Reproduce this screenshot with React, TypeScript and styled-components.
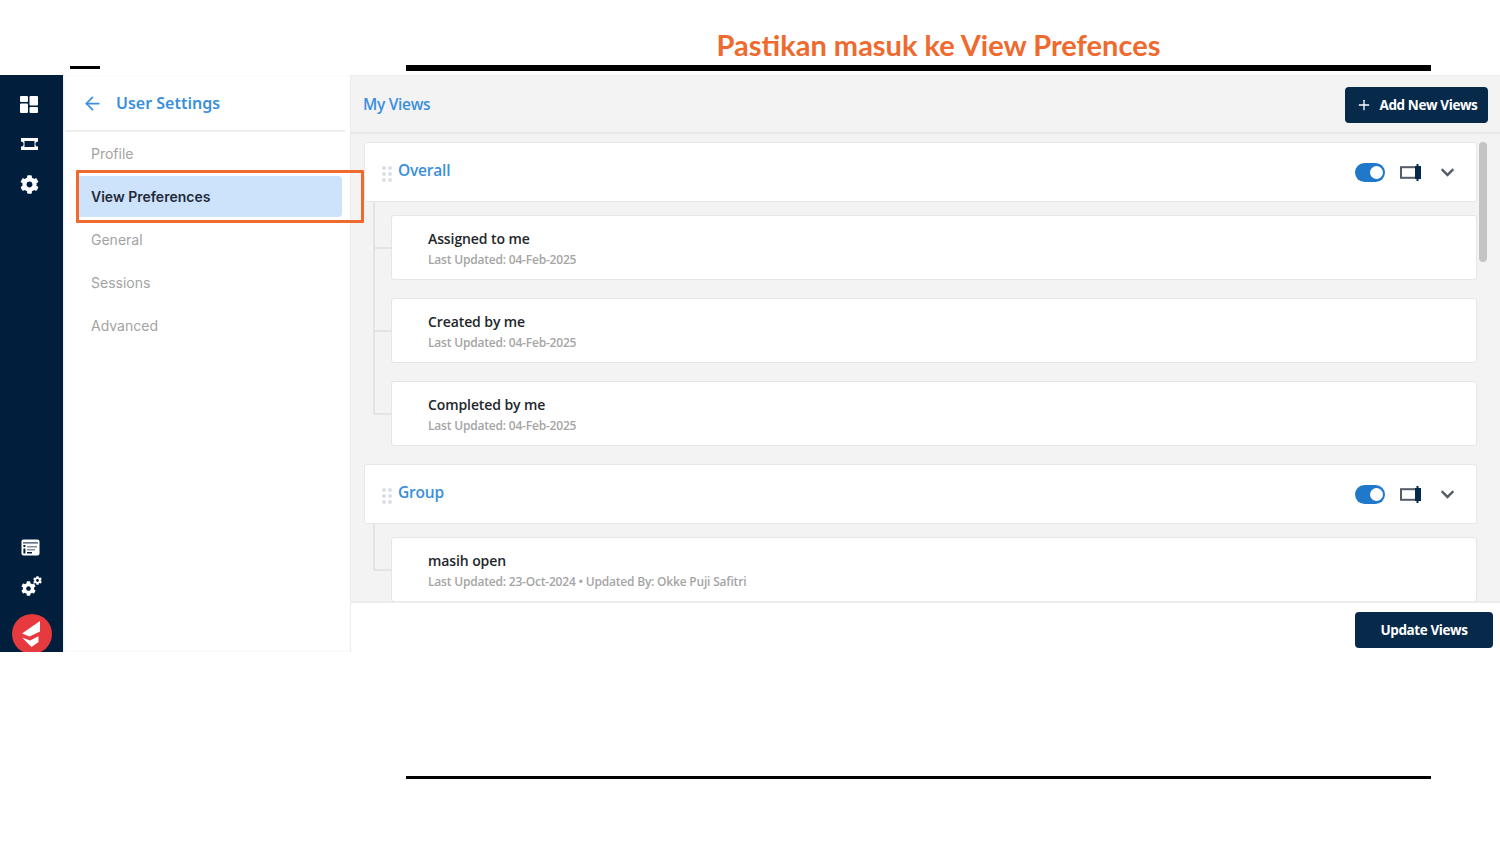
import styled, { createGlobalStyle } from "styled-components";
import { ArrowLeft, Plus } from "lucide-react";
import { FaChevronDown, FaCog } from "react-icons/fa";

const GlobalStyle = createGlobalStyle`
  html, body { margin: 0; padding: 0; background: #fff; }
  body { font-family: "Open Sans", "Liberation Sans", sans-serif; }
  * { box-sizing: border-box; }
`;

const Slide = styled.div`
  width: 1500px;
  height: 844px;
  background: #fff;
  overflow: hidden;
`;

const TitleBar = styled.div`
  height: 75px;
  display: flex;
  align-items: flex-end;
  padding-left: 70px;
`;

const ShortRule = styled.div`
  width: 30px;
  height: 3px;
  margin-bottom: 6px;
  margin-right: 306px;
  background: #000;
`;

const TitleColumn = styled.div`
  width: 1025px;
  margin-bottom: 4px;
`;

const Title = styled.h1`
  margin: 0 0 2px;
  padding-left: 40px;
  text-align: center;
  font-family: Lato, "Liberation Sans", sans-serif;
  font-size: 29px;
  line-height: 36px;
  font-weight: 700;
  color: #ee6a2e;
`;

const LongRule = styled.div<{ $thick: number }>`
  width: 1025px;
  height: ${(p) => p.$thick}px;
  background: #000;
`;

const Frame = styled.div`
  position: relative;
  height: 577px;
  display: flex;
  overflow: hidden;
`;

const Rail = styled.nav`
  width: 63px;
  flex: none;
  background: #011f3d;
  display: flex;
  flex-direction: column;
  align-items: center;
  padding: 19px 5px 0 0;
  color: #fff;
`;

const RailGroup = styled.div`
  display: flex;
  flex-direction: column;
  align-items: center;
  gap: 20px;
`;

const RailBottom = styled(RailGroup)`
  margin-top: auto;
  gap: 19px;
  padding-left: 2px;
`;

const RailIcon = styled.div`
  width: 20px;
  height: 20px;
  display: flex;
  align-items: center;
  justify-content: center;
`;

const GearPair = styled(RailIcon)`
  position: relative;
`;

const SmallGear = styled(FaCog)`
  position: absolute;
  top: 0;
  right: -2px;
`;

const LogoBadge = styled.div`
  width: 40px;
  height: 40px;
  margin: -1px 0 -2px 4px;
  border-radius: 50%;
  background: #e63a3f;
  display: flex;
  align-items: center;
  justify-content: center;
`;

const SettingsPanel = styled.aside`
  width: 288px;
  flex: none;
  background: #fff;
  padding: 1px 5px 0 2px;
  box-shadow: inset 1px 0 2px #e9edf1;
  border-right: 1px solid #ececec;
`;

const PanelHeader = styled.div`
  height: 56px;
  display: flex;
  align-items: center;
  gap: 13px;
  padding-left: 17px;
  border-bottom: 2px solid #eeeeee;
  color: #3a8fdc;
`;

const PanelTitle = styled.span`
  font-family: "Noto Sans", sans-serif;
  font-size: 16px;
  font-weight: 600;
`;

const PanelList = styled.ul`
  list-style: none;
  margin: 0;
  padding: 0 3px 0 12px;
`;

const PanelItem = styled.li<{ $active?: boolean }>`
  height: ${(p) => (p.$active ? "41px" : "43px")};
  margin: ${(p) => (p.$active ? "1px 0" : "0")};
  padding-left: 14px;
  display: flex;
  align-items: center;
  border-radius: 4px;
  font-family: Inter, sans-serif;
  font-size: 14px;
  font-weight: ${(p) => (p.$active ? 600 : 400)};
  color: ${(p) => (p.$active ? "#1f2b3a" : "#a3a3a3")};
  background: ${(p) => (p.$active ? "#cde2fb" : "transparent")};
`;

const Highlight = styled.div`
  position: absolute;
  left: 76px;
  top: 95px;
  width: 288px;
  height: 53px;
  border: 3px solid #ee6a2e;
  border-radius: 1px;
`;

const Main = styled.main`
  flex: 1;
  min-width: 0;
  display: flex;
  flex-direction: column;
  background: #f3f3f3;
  border-top: 1px solid #eee;
`;

const MainHeader = styled.div`
  height: 58px;
  flex: none;
  display: flex;
  align-items: center;
  justify-content: space-between;
  padding: 2px 12px 0 12px;
  border-bottom: 2px solid #e8e8e8;
`;

const MainTitle = styled.h2`
  margin: 0 0 3px;
  font-size: 15.5px;
  font-weight: 600;
  letter-spacing: -0.3px;
  color: #3a8fdc;
`;

const DarkButton = styled.button<{ $width: number }>`
  width: ${(p) => p.$width}px;
  height: 36px;
  display: flex;
  align-items: center;
  justify-content: center;
  gap: 8px;
  border: none;
  border-radius: 4px;
  background: #07294a;
  color: #fff;
  font-family: "Open Sans", sans-serif;
  font-size: 13.5px;
  font-weight: 700;
  letter-spacing: -0.4px;
`;

const Scroller = styled.div`
  position: relative;
  flex: 1;
  min-height: 0;
  overflow: hidden;
  padding: 8px 23px 0 13px;
`;

const ScrollThumb = styled.div`
  position: absolute;
  top: 8px;
  right: 13px;
  width: 8px;
  height: 120px;
  border-radius: 4px;
  background: #c4c4c4;
`;

const GroupCard = styled.div`
  height: 60px;
  display: flex;
  align-items: center;
  padding: 0 21px 0 17px;
  background: #fff;
  border: 1px solid #e8e8e8;
  border-radius: 3px;
`;

const Grip = styled.div`
  display: grid;
  grid-template-columns: repeat(2, 4px);
  grid-auto-rows: 4px;
  gap: 2px;
  margin: 3px 6px 0 0;
  span {
    border-radius: 50%;
    background: #dcdfe4;
  }
`;

const GroupName = styled.span`
  font-size: 15.5px;
  font-weight: 600;
  letter-spacing: -0.2px;
  color: #3a8fdc;
  margin-bottom: 4px;
`;

const GroupActions = styled.div`
  margin-left: auto;
  display: flex;
  align-items: center;
  color: #555d66;
`;

const Toggle = styled.div`
  width: 30px;
  height: 19px;
  margin-right: 15px;
  padding: 3px 2px;
  display: flex;
  justify-content: flex-end;
  border-radius: 10px;
  background: #1f78c9;
  &::after {
    content: "";
    width: 13px;
    height: 13px;
    border-radius: 50%;
    background: #fff;
  }
`;

const ChevronIcon = styled(FaChevronDown)`
  margin-left: 18px;
`;

const ChildList = styled.div`
  position: relative;
  display: flex;
  flex-direction: column;
  gap: 18px;
  padding: 13px 0 18px 27px;
  &::before {
    content: "";
    position: absolute;
    left: 9px;
    top: 0;
    bottom: 50px;
    width: 2px;
    background: #e3e3e3;
  }
`;

const ChildCard = styled.div`
  position: relative;
  height: 65px;
  flex: none;
  padding: 13px 0 0 36px;
  background: #fff;
  border: 1px solid #e6e6e6;
  border-radius: 3px;
  &::before {
    content: "";
    position: absolute;
    left: -18px;
    top: 31px;
    width: 18px;
    height: 2px;
    background: #e3e3e3;
  }
`;

const ChildName = styled.div`
  font-size: 14px;
  line-height: 19px;
  font-weight: 600;
  letter-spacing: -0.1px;
  color: #22262b;
`;

const ChildMeta = styled.div`
  margin-top: 4px;
  font-size: 12px;
  line-height: 16px;
  font-weight: 600;
  letter-spacing: -0.2px;
  color: #a5a5a5;
`;

const Footer = styled.div`
  height: 51px;
  flex: none;
  display: flex;
  justify-content: flex-end;
  padding: 9px 7px 0 0;
  background: #fff;
  border-top: 2px solid #ececec;
`;

const BottomRule = styled.div`
  margin: 124px 0 0 406px;
`;

const DashboardIcon = () => (
  <svg width="18" height="17" viewBox="0 0 18 17" fill="#fff">
    <rect x="0" y="0" width="8" height="6" rx="1" />
    <rect x="0" y="7.5" width="8" height="9.5" rx="1" />
    <rect x="9.5" y="0" width="8.5" height="9.5" rx="1" />
    <rect x="9.5" y="11" width="8.5" height="6" rx="1" />
  </svg>
);

const TicketIcon = () => (
  <svg width="19" height="14" viewBox="0 0 19 14">
    <path
      fill="#fff"
      d="M1 1h17v3.4a2.6 2.6 0 0 0 0 5.2V13H1V9.6a2.6 2.6 0 0 0 0-5.2z"
    />
    <rect x="4.5" y="4" width="10" height="6" fill="#011f3d" />
  </svg>
);

const WindowListIcon = () => (
  <svg width="19" height="17" viewBox="0 0 19 17">
    <rect x="0.5" y="0.5" width="18" height="16" rx="2" fill="#fff" />
    <rect x="2" y="3.4" width="15" height="1" fill="#011f3d" />
    <rect x="2.4" y="6" width="2" height="2" fill="#011f3d" />
    <rect x="2.4" y="9.5" width="2" height="5" fill="#011f3d" />
    <rect x="6" y="7" width="10" height="1.5" fill="#7f8fa0" />
    <rect x="6" y="10" width="8" height="1.5" fill="#7f8fa0" />
    <rect x="6" y="13" width="5" height="1.5" fill="#011f3d" />
  </svg>
);

const LogoMark = () => (
  <svg width="22" height="26" viewBox="0 0 22 26" fill="#fff">
    <path d="M19 0v10.5L8.5 15.5 1 12.5z" />
    <path d="M1 16.5l8 3 8.5-4.2V21l-7 5z" />
  </svg>
);

const PanelToggleIcon = () => (
  <svg width="22" height="19" viewBox="0 0 22 19" fill="none">
    <rect x="1" y="4.2" width="16" height="10.6" stroke="#555d66" strokeWidth="2" />
    <rect x="15" y="3" width="6" height="13" fill="#07294a" />
    <rect x="16.5" y="1" width="2" height="17" fill="#07294a" />
  </svg>
);

type ChildView = { name: string; meta: string };
type ViewGroup = { name: string; children: ChildView[] };

const groups: ViewGroup[] = [
  {
    name: "Overall",
    children: [
      { name: "Assigned to me", meta: "Last Updated: 04-Feb-2025" },
      { name: "Created by me", meta: "Last Updated: 04-Feb-2025" },
      { name: "Completed by me", meta: "Last Updated: 04-Feb-2025" },
    ],
  },
  {
    name: "Group",
    children: [
      {
        name: "masih open",
        meta: "Last Updated: 23-Oct-2024 • Updated By: Okke Puji Safitri",
      },
    ],
  },
];

const panelItems = ["Profile", "View Preferences", "General", "Sessions", "Advanced"];

export default function App() {
  return (
    <Slide>
      <GlobalStyle />
      <TitleBar>
        <ShortRule />
        <TitleColumn>
          <Title>Pastikan masuk ke View Prefences</Title>
          <LongRule $thick={6} />
        </TitleColumn>
      </TitleBar>

      <Frame>
        <Rail>
          <RailGroup>
            <RailIcon><DashboardIcon /></RailIcon>
            <RailIcon><TicketIcon /></RailIcon>
            <RailIcon><FaCog size={19} /></RailIcon>
          </RailGroup>
          <RailBottom>
            <RailIcon><WindowListIcon /></RailIcon>
            <GearPair>
              <FaCog size={15} style={{ marginTop: 4, marginRight: 4 }} />
              <SmallGear size={9} />
            </GearPair>
            <LogoBadge><LogoMark /></LogoBadge>
          </RailBottom>
        </Rail>

        <SettingsPanel>
          <PanelHeader>
            <ArrowLeft size={21} strokeWidth={2} />
            <PanelTitle>User Settings</PanelTitle>
          </PanelHeader>
          <PanelList>
            {panelItems.map((item) => (
              <PanelItem key={item} $active={item === "View Preferences"}>
                {item}
              </PanelItem>
            ))}
          </PanelList>
        </SettingsPanel>

        <Main>
          <MainHeader>
            <MainTitle>My Views</MainTitle>
            <DarkButton $width={143}>
              <Plus size={16} strokeWidth={2} />
              Add New Views
            </DarkButton>
          </MainHeader>
          <Scroller>
            {groups.map((group) => (
              <div key={group.name}>
                <GroupCard>
                  <Grip>
                    {Array.from({ length: 6 }, (_, i) => <span key={i} />)}
                  </Grip>
                  <GroupName>{group.name}</GroupName>
                  <GroupActions>
                    <Toggle />
                    <PanelToggleIcon />
                    <ChevronIcon size={15} />
                  </GroupActions>
                </GroupCard>
                <ChildList>
                  {group.children.map((child) => (
                    <ChildCard key={child.name}>
                      <ChildName>{child.name}</ChildName>
                      <ChildMeta>{child.meta}</ChildMeta>
                    </ChildCard>
                  ))}
                </ChildList>
              </div>
            ))}
            <ScrollThumb />
          </Scroller>
          <Footer>
            <DarkButton $width={138}>Update Views</DarkButton>
          </Footer>
        </Main>
        <Highlight />
      </Frame>

      <BottomRule>
        <LongRule $thick={3} />
      </BottomRule>
    </Slide>
  );
}
